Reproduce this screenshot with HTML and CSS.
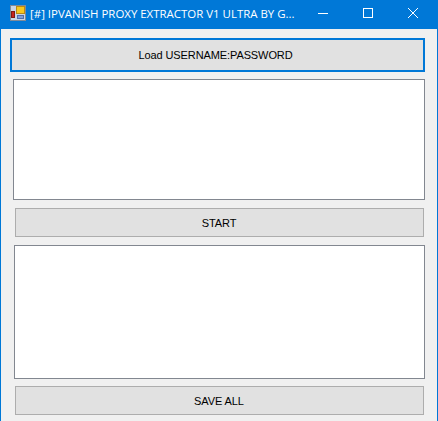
FILE: index.html
```html
<!DOCTYPE html>
<html lang="en">
<head>
<meta charset="utf-8">
<title>IPVanish Proxy Extractor</title>
<link rel="stylesheet" href="styles.css">
</head>
<body>
<div class="window">
  <header class="titlebar">
    <svg class="app-icon" width="16" height="16" viewBox="0 0 16 16">
      <rect x="0.5" y="0.5" width="15" height="15" fill="#c9d6e6" stroke="#7f8a98"/>
      <rect x="6.5" y="1.5" width="8" height="7" fill="#f7c81f" stroke="#b98a16"/>
      <rect x="1.5" y="6.5" width="3" height="6" fill="#c8231c" stroke="#7c1a14"/>
      <rect x="7.5" y="10.5" width="6" height="3" fill="#7f9fdc" stroke="#5270ad"/>
    </svg>
    <span class="title">[#] IPVANISH PROXY EXTRACTOR V1 ULTRA BY G...</span>
    <div class="controls">
      <span class="control">
        <svg width="10" height="10" viewBox="0 0 10 10"><path d="M0 5.5H10" stroke="#fff" fill="none"/></svg>
      </span>
      <span class="control">
        <svg width="10" height="10" viewBox="0 0 10 10"><rect x="0.5" y="0.5" width="9" height="9" stroke="#fff" fill="none"/></svg>
      </span>
      <span class="control">
        <svg width="10" height="10" viewBox="0 0 10 10"><path d="M0 0L10 10M10 0L0 10" stroke="#fff" fill="none"/></svg>
      </span>
    </div>
  </header>
  <main class="client">
    <button class="btn btn-focus">Load USERNAME:PASSWORD</button>
    <div class="textbox box-one"></div>
    <button class="btn btn-start">START</button>
    <div class="textbox box-two"></div>
    <button class="btn btn-save">SAVE ALL</button>
  </main>
</div>
</body>
</html>
```
FILE: styles.css
```css
* { box-sizing: border-box; }
html, body { margin: 0; height: 100%; overflow: hidden; }
.window {
  width: 438px;
  height: 421px;
  display: flex;
  flex-direction: column;
  background: #0078d7;
  padding: 0 1px;
  font-family: "Liberation Sans", Arial, sans-serif;
}
.titlebar {
  height: 29px;
  flex: none;
  display: flex;
  align-items: center;
  padding-left: 9px;
  color: #fff;
}
.app-icon { flex: none; margin-top: -3px; }
.title {
  margin-left: 4px;
  margin-top: -2px;
  font-family: "Open Sans", sans-serif;
  font-size: 11.45px;
  white-space: nowrap;
  flex: 1;
}
.controls { display: flex; margin-right: 2px; }
.control {
  width: 45px;
  height: 29px;
  display: flex;
  align-items: center;
  justify-content: center;
  margin-top: -3px;
}
.client {
  flex: 1;
  background: #f0f0f0;
  padding: 9px 12px 0 9px;
  display: flex;
  flex-direction: column;
}
.btn {
  display: block;
  padding: 0;
  background: #e1e1e1;
  border: 1px solid #adadad;
  font-family: "Liberation Sans", Arial, sans-serif;
  font-size: 11px;
  letter-spacing: -0.1px;
  color: #000;
  flex: none;
}
.btn-focus { height: 34px; border: 2px solid #0078d7; width: 415px; padding-right: 4px; }
.btn-start { height: 29px; margin: 8px 0 0 5px; width: 409px; padding-right: 1px; }
.btn-save { height: 29px; margin: 7px 0 0 5px; width: 409px; padding-right: 1px; }
.textbox { background: #fff; border: 1px solid #828790; flex: none; }
.box-one { height: 121px; margin: 7px 0 0 3px; width: 412px; }
.box-two { height: 134px; margin: 8px 0 0 4px; width: 411px; }
```
